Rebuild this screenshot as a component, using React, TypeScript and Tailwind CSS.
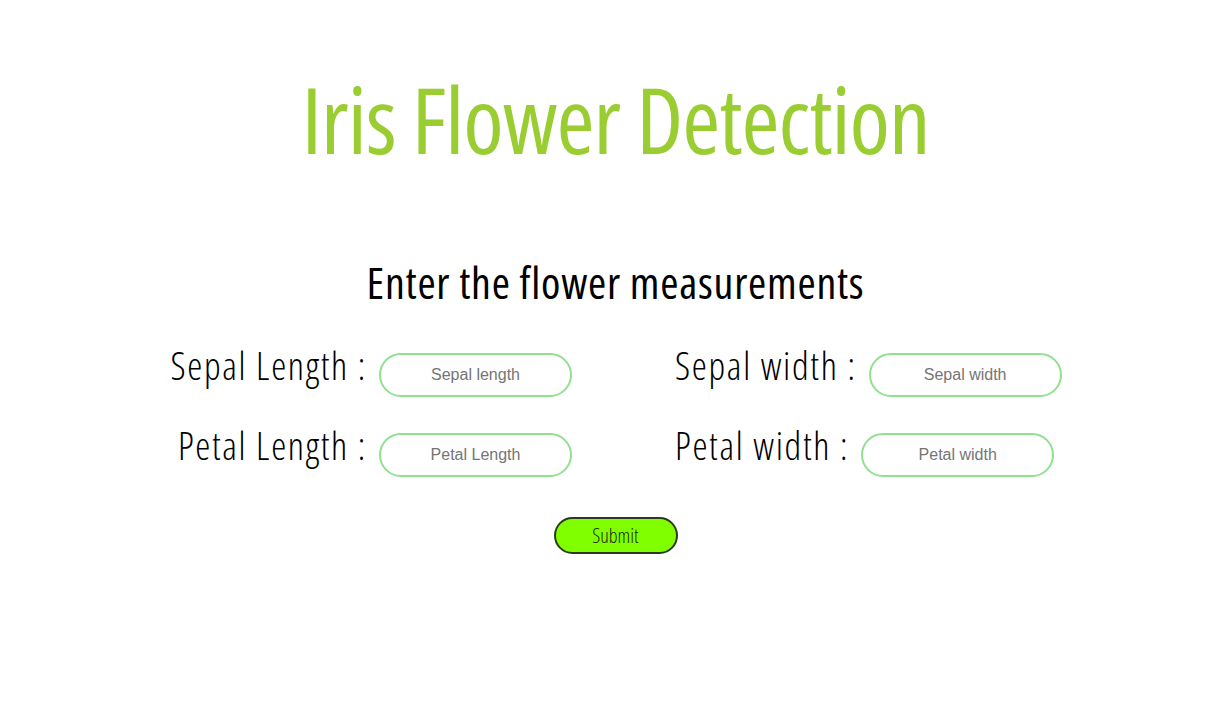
import React from 'react';

const fields = [
  { label: 'Sepal Length :', placeholder: 'Sepal length', side: 'left' },
  { label: 'Sepal width :', placeholder: 'Sepal width', side: 'right' },
  { label: 'Petal Length :', placeholder: 'Petal Length', side: 'left' },
  { label: 'Petal width :', placeholder: 'Petal width', side: 'right' },
];

const condensed = { fontStretch: '75%' } as React.CSSProperties;

export default function App() {
  return (
    <div className="min-h-[703px] w-full bg-white font-['Open_Sans',sans-serif]">
      <h1
        style={condensed}
        className="pl-[10px] pt-[54px] text-center text-[92px] font-normal leading-[130px] tracking-[-1px] text-[#9acd32]"
      >
        Iris Flower Detection
      </h1>

      <h2
        style={condensed}
        className="mt-[68px] pl-[10px] text-center text-[44px] font-medium leading-[60px] tracking-[0.75px] text-black"
      >
        Enter the flower measurements
      </h2>

      <form className="mt-[31px] grid grid-cols-[572px_1fr] gap-y-[26px]">
        {fields.map((f) => (
          <div
            key={f.label}
            className={`flex items-start gap-3 ${f.side === 'left' ? 'justify-end' : 'pl-[103px]'}`}
          >
            <label
              style={condensed}
              className="text-[38px] font-light leading-[44px] tracking-[1.7px] text-black"
            >
              {f.label}
            </label>
            <input
              type="text"
              placeholder={f.placeholder}
              className="mt-[10px] h-[44px] w-[193px] rounded-full border-2 border-[#90e090] bg-white text-center font-['Liberation_Sans',sans-serif] text-[16px] text-gray-700 outline-none placeholder:text-[#757575]"
            />
          </div>
        ))}
      </form>

      <div className="mt-[40px] flex justify-center pl-[10px]">
        <button
          type="submit"
          style={condensed}
          className="h-[37px] w-[124px] rounded-full border-2 border-[#2d3a1f] bg-[#7fff00] text-[20px] font-light leading-none text-[#1a2a0a]"
        >
          Submit
        </button>
      </div>
    </div>
  );
}
